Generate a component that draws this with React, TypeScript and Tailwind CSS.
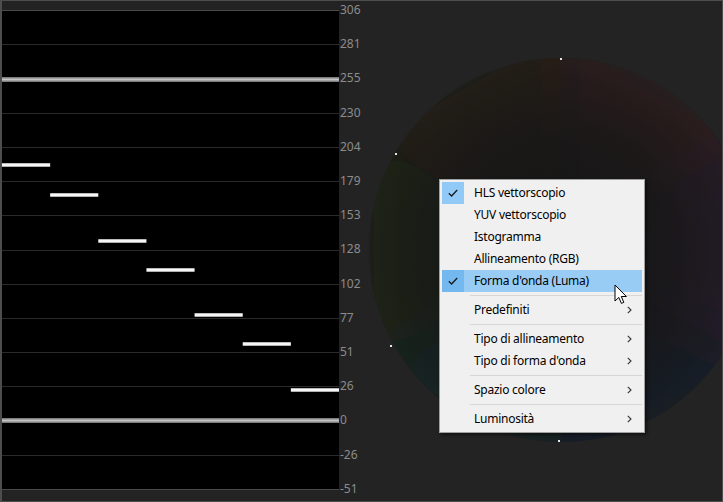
import React from 'react';

const scaleLabels = ['306', '281', '255', '230', '204', '179', '153', '128', '102', '77', '51', '26', '0', '-26', '-51'];

// waveform bars: page y centre of each seventh of the width
const bars = [165, 195, 241, 270, 315, 344, 390];

type MenuRow =
  | { kind: 'item'; label: string; checked?: boolean; active?: boolean; sub?: boolean }
  | { kind: 'sep' };

const menuRows: MenuRow[] = [
  { kind: 'item', label: 'HLS vettorscopio', checked: true },
  { kind: 'item', label: 'YUV vettorscopio' },
  { kind: 'item', label: 'Istogramma' },
  { kind: 'item', label: 'Allineamento (RGB)' },
  { kind: 'item', label: "Forma d'onda (Luma)", checked: true, active: true },
  { kind: 'sep' },
  { kind: 'item', label: 'Predefiniti', sub: true },
  { kind: 'sep' },
  { kind: 'item', label: 'Tipo di allineamento', sub: true },
  { kind: 'item', label: "Tipo di forma d'onda", sub: true },
  { kind: 'sep' },
  { kind: 'item', label: 'Spazio colore', sub: true },
  { kind: 'sep' },
  { kind: 'item', label: 'Luminosità', sub: true },
];

const Waveform: React.FC = () => {
  const step = 479 / 14;
  return (
    <div className="mt-[9px] w-[337px] h-[480px] bg-black shrink-0">
      <svg width="337" height="480" viewBox="0 0 337 480">
        <defs>
          <linearGradient id="thick" x1="0" y1="0" x2="0" y2="1">
            <stop offset="0" stopColor="#6d6d6d" />
            <stop offset="0.5" stopColor="#c4c4c4" />
            <stop offset="1" stopColor="#6d6d6d" />
          </linearGradient>
          <linearGradient id="bar" x1="0" y1="0" x2="0" y2="1">
            <stop offset="0" stopColor="#9a9a9a" />
            <stop offset="0.35" stopColor="#f6f6f6" />
            <stop offset="0.65" stopColor="#f6f6f6" />
            <stop offset="1" stopColor="#8a8a8a" />
          </linearGradient>
        </defs>
        {scaleLabels.map((_, i) => {
          const y = Math.round(i * step) + 0.5;
          const edge = i === 0 || i === 14;
          return <line key={i} x1="0" x2="337" y1={y} y2={y} stroke={edge ? '#4a4a4a' : '#2a2a2a'} strokeWidth="1" />;
        })}
        <rect x="0" y={67} width="337" height="5" fill="url(#thick)" />
        <rect x="0" y={408} width="337" height="5" fill="url(#thick)" />
        {bars.map((cy, i) => (
          <rect key={i} x={(i * 337) / 7} y={cy - 10 - 2} width={337 / 7} height="4" fill="url(#bar)" />
        ))}
      </svg>
    </div>
  );
};

const Vectorscope: React.FC = () => (
  <div className="flex-1 overflow-hidden">
    <div className="mt-[57px] ml-[3px] w-[384px] h-[384px]">
      <svg width="384" height="384" viewBox="0 0 384 384">
        <defs>
          <clipPath id="disc">
            <circle cx="192" cy="192" r="192" />
          </clipPath>
          <filter id="soft" x="-20%" y="-20%" width="140%" height="140%">
            <feGaussianBlur stdDeviation="28" />
          </filter>
          <radialGradient id="core" cx="0.5" cy="0.5" r="0.5">
            <stop offset="0" stopColor="#161616" stopOpacity="1" />
            <stop offset="0.55" stopColor="#171717" stopOpacity="0.85" />
            <stop offset="1" stopColor="#171717" stopOpacity="0" />
          </radialGradient>
        </defs>
        <g clipPath="url(#disc)">
          <rect width="384" height="384" fill="#1a1a1b" />
          <g filter="url(#soft)">
            <path d="M192 192 L192 -60 L410 66 Z" fill="#2a1a1d" />
            <path d="M192 192 L410 66 L410 318 Z" fill="#251b2b" />
            <path d="M192 192 L410 318 L192 444 Z" fill="#191b26" />
            <path d="M192 192 L192 444 L-26 318 Z" fill="#162020" />
            <path d="M192 192 L-26 318 L-26 66 Z" fill="#1a2118" />
            <path d="M192 192 L-26 66 L192 -60 Z" fill="#231e18" />
          </g>
          <circle cx="192" cy="192" r="192" fill="url(#core)" />
        </g>
        <rect x="191" y="0" width="2" height="2" fill="#e6e6e6" />
        <rect x="26" y="95" width="2" height="2" fill="#e6e6e6" />
        <rect x="21" y="287" width="2" height="2" fill="#e6e6e6" />
        <rect x="189" y="382" width="2" height="2" fill="#e6e6e6" />
      </svg>
    </div>
  </div>
);

const Check: React.FC = () => (
  <svg width="10" height="8" viewBox="0 0 10 8">
    <path d="M0.8 4.2 L3.6 7 L9.2 1" fill="none" stroke="#1a1a1a" strokeWidth="1.3" />
  </svg>
);

const Chevron: React.FC = () => (
  <svg width="5" height="8" viewBox="0 0 5 8">
    <path d="M0.8 0.8 L4 4 L0.8 7.2" fill="none" stroke="#333" strokeWidth="1.1" />
  </svg>
);

const ContextMenu: React.FC = () => (
  <div className="absolute left-[439px] top-[179px] w-[206px] border border-[#a0a0a0] bg-[#f0f0f0] p-[2px] shadow-[2px_2px_3px_rgba(0,0,0,0.45)] font-['Noto_Sans',sans-serif] text-[12px] tracking-[-0.25px] text-black">
    {menuRows.map((row, i) =>
      row.kind === 'sep' ? (
        <div key={i} className="h-[7px] flex items-center pl-[28px]">
          <div className="h-px flex-1 bg-[#d7d7d7]" />
        </div>
      ) : (
        <div key={i} className={`h-[22px] flex items-center ${row.active ? 'bg-[#99ccf5]' : ''}`}>
          <div
            className={`w-[22px] h-full flex items-center justify-center ${
              row.checked ? (row.active ? 'bg-[#74b8f0]' : 'bg-[#91c9f7]') : ''
            }`}
          >
            {row.checked && <Check />}
          </div>
          <span className="pl-[10px] flex-1 leading-[22px]">{row.label}</span>
          {row.sub && (
            <span className="pr-[10px] flex items-center">
              <Chevron />
            </span>
          )}
        </div>
      )
    )}
  </div>
);

const Cursor: React.FC = () => (
  <svg className="absolute left-[614px] top-[284px]" width="14" height="21" viewBox="0 0 14 21">
    <path d="M1 1 L1 17 L4.8 13.4 L7.4 19.4 L9.8 18.4 L7.3 12.5 L12.4 12.5 Z" fill="#fff" stroke="#000" strokeWidth="1" strokeLinejoin="round" />
  </svg>
);

const App: React.FC = () => {
  return (
    <div className="relative w-[723px] h-[502px] overflow-hidden bg-[#232323]">
      <div className="w-full h-full flex border border-l-2 border-[#4d4d4d] bg-[#232323]">
        <Waveform />
        <div className="ml-[2px] mt-[2px] h-[493px] w-[25px] flex flex-col justify-between font-['Noto_Sans',sans-serif] text-[12px] text-[#8c8c8c]">
          {scaleLabels.map((l) => (
            <div key={l} className="h-[14px] leading-[14px] -ml-[1px] whitespace-nowrap">
              {l}
            </div>
          ))}
        </div>
        <Vectorscope />
      </div>
      <ContextMenu />
      <Cursor />
    </div>
  );
};

export default App;
